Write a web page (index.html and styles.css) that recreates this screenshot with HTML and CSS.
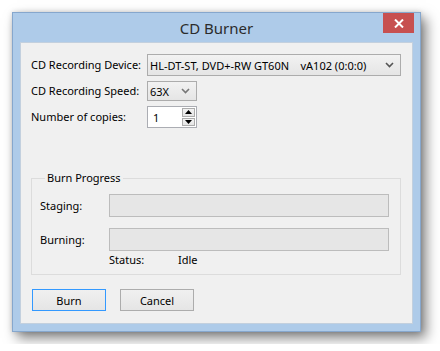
FILE: index.html
```html
<!DOCTYPE html>
<html lang="en">
<head>
    <meta charset="UTF-8">
    <title>CD Burner</title>
    <link rel="stylesheet" href="styles.css">
</head>
<body>
    <div class="window">
        <div class="titlebar">
            <span class="title">CD Burner</span>
            <button class="close">
                <svg width="10" height="9" viewBox="0 0 10 9"><path d="M1 0.5 L9 8.5 M9 0.5 L1 8.5" stroke="#fff" stroke-width="2"/></svg>
            </button>
        </div>
        <div class="client">
            <div class="form">
                <span class="lbl">CD Recording Device:</span>
                <div class="combo combo-device">
                    <span class="combo-text">HL-DT-ST, DVD+-RW GT60N    vA102 (0:0:0)</span>
                    <svg class="chev" width="9" height="6" viewBox="0 0 9 6"><path d="M1 1 L4.5 4.5 L8 1" stroke="#555" stroke-width="1.6" fill="none"/></svg>
                </div>

                <span class="lbl">CD Recording Speed:</span>
                <div class="combo combo-speed">
                    <span class="combo-text">63X</span>
                    <svg class="chev" width="9" height="6" viewBox="0 0 9 6"><path d="M1 1 L4.5 4.5 L8 1" stroke="#777" stroke-width="1.6" fill="none"/></svg>
                </div>

                <span class="lbl">Number of copies:</span>
                <div class="spin">
                    <span class="spin-value">1</span>
                    <div class="spin-btns">
                        <div class="spin-btn"><svg width="7" height="4" viewBox="0 0 7 4"><path d="M0 4 L3.5 0 L7 4 Z" fill="#000"/></svg></div>
                        <div class="spin-btn"><svg width="7" height="4" viewBox="0 0 7 4"><path d="M0 0 L3.5 4 L7 0 Z" fill="#000"/></svg></div>
                    </div>
                </div>
            </div>

            <fieldset class="group">
                <legend>Burn Progress</legend>
                <div class="prog-row">
                    <span class="prog-lbl">Staging:</span>
                    <div class="bar"></div>
                </div>
                <div class="prog-row">
                    <span class="prog-lbl">Burning:</span>
                    <div class="bar"></div>
                </div>
                <div class="status-row">
                    <span class="prog-lbl"></span>
                    <span class="status-lbl">Status:</span>
                    <span>Idle</span>
                </div>
            </fieldset>

            <div class="buttons">
                <button class="btn btn-default">Burn</button>
                <button class="btn">Cancel</button>
            </div>
        </div>
    </div>
</body>
</html>
```

FILE: styles.css
```css
* {
    box-sizing: border-box;
}
body {
    margin: 0;
    padding: 12px;
    background: #fff;
    font-family: "Noto Sans", "Open Sans", sans-serif;
    font-size: 11px;
    color: #000;
}
.window {
    width: 409px;
    height: 320px;
    border: 1px solid #86a7cd;
    background: #aecbe9;
    padding: 0 7px 7px;
    display: flex;
    flex-direction: column;
    box-shadow: 5px 6px 12px rgba(0, 0, 0, 0.5), 0 0 5px rgba(0, 0, 0, 0.15);
}
.titlebar {
    height: 29px;
    flex-shrink: 0;
    display: grid;
    grid-template-columns: 1fr auto 1fr;
    align-items: start;
}
.title {
    grid-column: 2;
    font-size: 15px;
    line-height: 31px;
    color: #2b2b2b;
}
.close {
    grid-column: 3;
    justify-self: end;
    width: 31px;
    height: 20px;
    margin-right: -1px;
    border: 0;
    padding: 0;
    background: #c75050;
    display: flex;
    align-items: center;
    justify-content: center;
}
.client {
    flex: 1;
    background: #f0f0f0;
    border: 1px solid #c3d0de;
    padding: 11px 10px 0 10px;
}
.form {
    display: grid;
    grid-template-columns: 116px auto;
    row-gap: 5px;
    align-items: center;
    white-space: nowrap;
}
.lbl {
    line-height: 16px;
}
.combo {
    height: 20px;
    border: 1px solid #acacac;
    background: linear-gradient(#f2f2f2, #e5e5e5);
    display: flex;
    align-items: center;
    padding: 0 6px 0 2px;
}
.combo-device {
    width: 254px;
    height: 22px;
}
.combo-speed {
    width: 50px;
}
.combo-text {
    flex: 1;
    white-space: pre;
}
.spin {
    width: 50px;
    height: 22px;
    border: 1px solid #abadb3;
    background: #fff;
    display: flex;
    align-items: center;
    padding: 1px 1px 1px 1px;
}
.spin-value {
    flex: 1;
    padding-left: 4px;
}
.spin-btns {
    display: flex;
    flex-direction: column;
    gap: 1px;
    height: 100%;
}
.spin-btn {
    flex: 1;
    width: 13px;
    border: 1px solid #acacac;
    background: linear-gradient(#f2f2f2, #e5e5e5);
    display: flex;
    align-items: center;
    justify-content: center;
}
.group {
    margin: 42px 1px 0 0;
    padding: 8px 11px 6px 8px;
    border: 1px solid #dcdcdc;
    min-width: 0;
}
.group legend {
    padding: 0 2px;
    margin-left: 5px;
    line-height: 16px;
}
.prog-row {
    display: flex;
    align-items: center;
    margin-bottom: 11px;
}
.prog-lbl {
    width: 69px;
    flex-shrink: 0;
}
.bar {
    flex: 1;
    height: 23px;
    border: 1px solid #bcbcbc;
    background: #e6e6e6;
}
.status-row {
    display: flex;
    margin-top: -10px;
    line-height: 16px;
}
.status-lbl {
    width: 69px;
}
.buttons {
    display: flex;
    gap: 14px;
    margin-top: 14px;
    padding-left: 1px;
}
.btn {
    width: 74px;
    height: 22px;
    border: 1px solid #acacac;
    background: linear-gradient(#f0f0f0, #e5e5e5);
    font-family: inherit;
    font-size: 11px;
    color: #000;
    padding: 0;
}
.btn-default {
    border-color: #3399ff;
}
```
